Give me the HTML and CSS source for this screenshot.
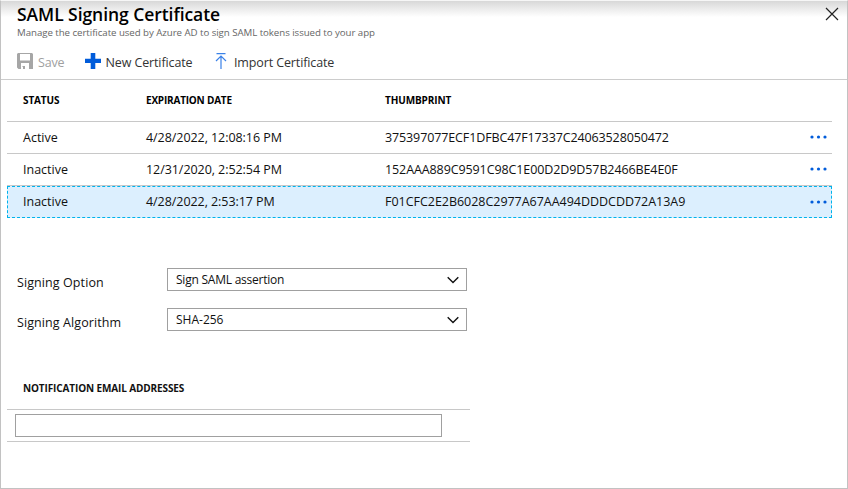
FILE: index.html
```html
<!DOCTYPE html>
<html lang="en">
<head>
<meta charset="utf-8">
<title>SAML Signing Certificate</title>
<link rel="stylesheet" href="styles.css">
</head>
<body>
<main class="panel">
  <header class="header">
    <div>
      <h1 class="title">SAML Signing Certificate</h1>
      <p class="subtitle">Manage the certificate used by Azure AD to sign SAML tokens issued to your app</p>
    </div>
    <svg class="close" width="14" height="14" viewBox="0 0 14 14"><path d="M1 1l12 12M13 1L1 13"/></svg>
  </header>
  <nav class="toolbar">
    <div class="command disabled">
      <svg width="16" height="16" viewBox="0 0 16 16"><path fill="#a6a6a6" fill-rule="evenodd" d="M1 0h14l1 1v15H6v-2.500H5V16H1.500L0 14.500V1zM3 1v6.500h10V1zM4 10v6h1v-3h3v3h4v-6z"/></svg>
      <span>Save</span>
    </div>
    <div class="command new">
      <svg width="16" height="16" viewBox="0 0 16 16"><path fill="#015cda" d="M5.700 0h4.600v5.700H16v4.300h-5.700v6H5.700v-6H0V5.700h5.700z"/></svg>
      <span>New Certificate</span>
    </div>
    <div class="command import">
      <svg width="12" height="16" viewBox="0 0 12 16"><path fill="none" stroke="#3b82e8" stroke-width="1.200" d="M1.500 .6h9M6 3v13M1 8l5-5 5 5"/></svg>
      <span>Import Certificate</span>
    </div>
  </nav>
  <section class="grid">
    <div class="row head"><b>STATUS</b><b class="wide">EXPIRATION DATE</b><b>THUMBPRINT</b></div>
    <div class="row"><span>Active</span><span class="date">4/28/2022, 12:08:16 PM</span><span class="print-a">375397077ECF1DFBC47F17337C24063528050472</span><svg class="dots" width="18" height="4" viewBox="0 0 18 4"><circle cx="2" cy="2" r="1.600"/><circle cx="8.500" cy="2" r="1.600"/><circle cx="15" cy="2" r="1.600"/></svg></div>
    <div class="row"><span>Inactive</span><span class="date">12/31/2020, 2:52:54 PM</span><span class="print-b">152AAA889C9591C98C1E00D2D9D57B2466BE4E0F</span><svg class="dots" width="18" height="4" viewBox="0 0 18 4"><circle cx="2" cy="2" r="1.600"/><circle cx="8.500" cy="2" r="1.600"/><circle cx="15" cy="2" r="1.600"/></svg></div>
    <div class="row selected"><span>Inactive</span><span class="date">4/28/2022, 2:53:17 PM</span><span class="print-c">F01CFC2E2B6028C2977A67AA494DDDCDD72A13A9</span><svg class="dots" width="18" height="4" viewBox="0 0 18 4"><circle cx="2" cy="2" r="1.600"/><circle cx="8.500" cy="2" r="1.600"/><circle cx="15" cy="2" r="1.600"/></svg></div>
  </section>
  <section class="form">
    <div class="field"><label>Signing Option</label>
      <div class="select"><span class="option">Sign SAML assertion</span><svg width="12" height="8" viewBox="0 0 12 8"><path d="M.7 1.200L6 6.500l5.300-5.300"/></svg></div></div>
    <div class="field"><label>Signing Algorithm</label>
      <div class="select"><span>SHA-256</span><svg width="12" height="8" viewBox="0 0 12 8"><path d="M.7 1.200L6 6.500l5.300-5.300"/></svg></div></div>
  </section>
  <section class="emails">
    <h2>NOTIFICATION EMAIL ADDRESSES</h2>
    <div class="email-row"><input type="text" aria-label="Email address"></div>
  </section>
</main>
</body>
</html>
```
FILE: styles.css
```css
* { box-sizing: border-box; }
body { margin: 0; font-family: "Open Sans", "Noto Sans", sans-serif; font-size: 12.5px; color: #111; background: #fff; }
h1, h2, p { margin: 0; }
span, b { white-space: nowrap; }
.panel { width: 848px; height: 489px; border: 1px solid #c2c2c2; border-top-color: #f6f6f6; background: linear-gradient(#d8d8d8, #fff 16px); overflow: hidden; }
.header { display: flex; justify-content: space-between; height: 43px; padding: 0 8px 0 16px; }
.title { font-size: 17.5px; font-weight: 600; line-height: 27px; height: 24px; letter-spacing: -0.060px; color: #000; }
.subtitle { font-size: 9.700px; line-height: 15px; letter-spacing: -0.050px; color: #666; }
.close { margin-top: 6px; fill: none; stroke: #222; stroke-width: 1.200; }
.toolbar { display: flex; height: 36px; padding: 0 16px; border-bottom: 1px solid #ccc; }
.command { display: flex; align-items: flex-start; height: 35px; color: #333; }
.command svg { margin-top: 9px; }
.command span { margin-left: 5px; line-height: 37px; letter-spacing: -0.120px; }
.command.disabled { width: 68px; color: #a0a0a0; }
.command.disabled span { letter-spacing: -0.200px; }
.command.new { width: 130px; }
.command.new span { margin-left: 4.500px; }
.command.import span { margin-left: 7px; }
.grid { margin: 0 15px 0 6px; }
.row { display: grid; grid-template-columns: 123px 239px 1fr 18px; align-items: center; height: 32px; padding: 0 4px 0 16px; border-bottom: 1px solid #c8c8c8; line-height: 31px; }
.head { height: 42px; line-height: 41px; font-size: 10px; letter-spacing: -0.120px; color: #000; }
.head .wide { letter-spacing: -0.200px; }
.date { letter-spacing: -0.060px; }
.print-a { letter-spacing: -0.120px; }
.print-b { letter-spacing: -0.100px; }
.print-c { letter-spacing: -0.030px; }
.selected { background: #dceffe; border: 1px dashed #00b3ec; padding: 0 3px 0 15px; line-height: 30px; }
.dots { fill: #015cda; margin-bottom: 1px; }
.form { margin: 50px 0 0 16px; display: grid; gap: 17px; }
.field { display: flex; height: 23px; }
.field label { width: 150px; line-height: 29px; letter-spacing: 0.090px; }
.select { display: flex; justify-content: space-between; align-items: center; width: 300px; height: 23px; border: 1px solid #a0a0a0; padding: 0 7px 0 8px; font-size: 12px; line-height: 21px; background: #fff; }
.select .option { letter-spacing: -0.230px; }
.select svg { fill: none; stroke: #111; stroke-width: 1.400; }
.emails { width: 463px; margin: 37px 0 0 6px; }
.emails h2 { height: 42px; padding-left: 16px; border-bottom: 1px solid #c8c8c8; font-size: 10px; line-height: 41px; letter-spacing: -0.120px; }
.email-row { height: 32px; padding: 4px 8px; border-bottom: 1px solid #c8c8c8; }
.email-row input { display: block; width: 427px; height: 23px; border: 1px solid #a0a0a0; border-radius: 0; }
```
